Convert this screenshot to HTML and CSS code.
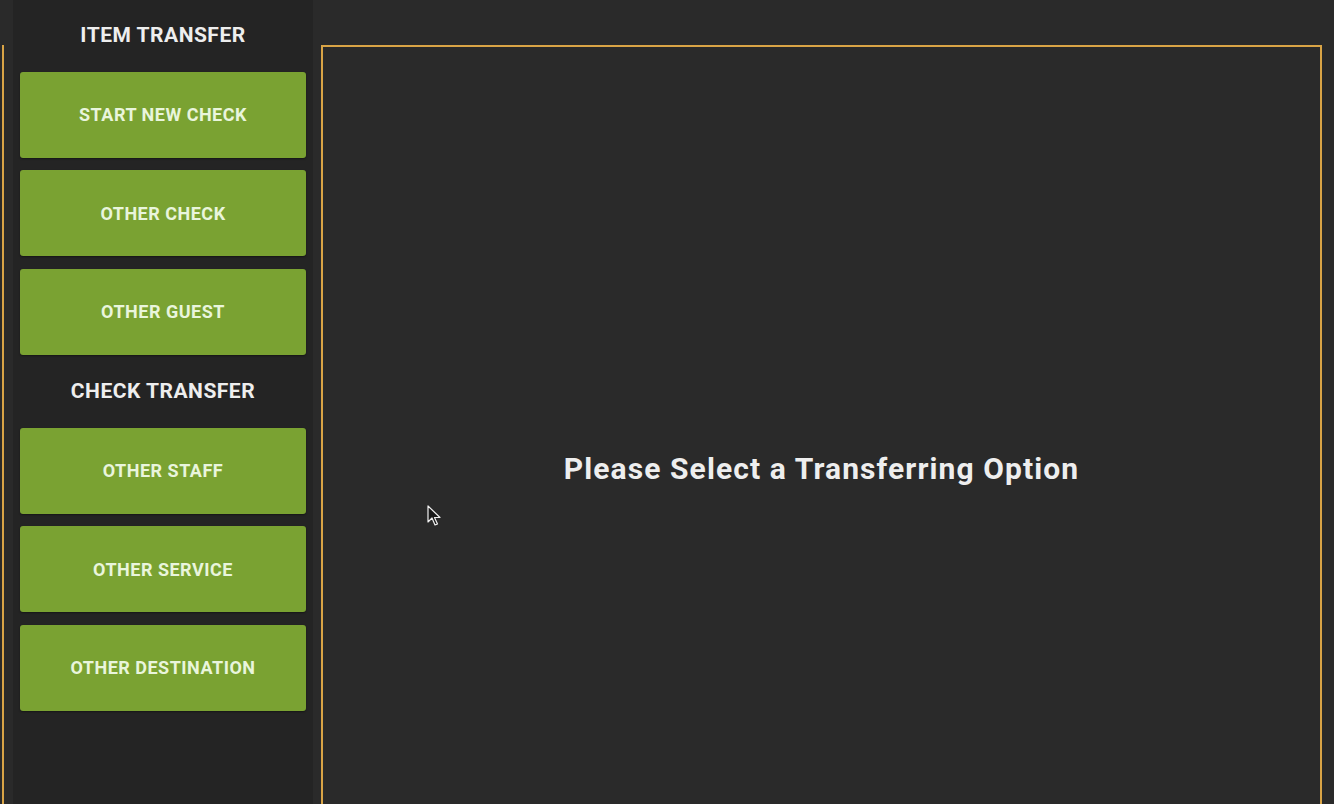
FILE: index.html
```html
<!DOCTYPE html>
<html>
<head>
<meta charset="utf-8">
<link rel="stylesheet" href="styles.css">
</head>
<body>
<div class="screen">
  <div class="prev-edge"></div>
  <aside class="sidebar">
    <h2 class="heading heading-first">ITEM TRANSFER</h2>
    <button class="btn">START NEW CHECK</button>
    <button class="btn">OTHER CHECK</button>
    <button class="btn">OTHER GUEST</button>
    <h2 class="heading">CHECK TRANSFER</h2>
    <button class="btn">OTHER STAFF</button>
    <button class="btn">OTHER SERVICE</button>
    <button class="btn">OTHER DESTINATION</button>
  </aside>
  <main class="panel">
    <p class="prompt">Please Select a Transferring Option</p>
  </main>
</div>
<svg class="cursor" width="14" height="22" viewBox="0 0 14 22">
  <path d="M1 1 L1 17 L5 13 L8 20 L10.5 19 L7.5 12.5 L13 12.5 Z" fill="#1a1a1a" stroke="#f0f0f0" stroke-width="1.2" stroke-linejoin="round"/>
</svg>
</body>
</html>
```
FILE: styles.css
```css
html, body {
  margin: 0;
  padding: 0;
  width: 1334px;
  height: 804px;
  overflow: hidden;
  background: #2a2a2a;
  font-family: Roboto, "Liberation Sans", sans-serif;
}
.screen {
  display: flex;
  align-items: flex-start;
  height: 804px;
  overflow: hidden;
}
.prev-edge {
  width: 2px;
  height: 759px;
  margin-top: 45px;
  border-right: 2px solid #d9a446;
  flex: none;
}
.sidebar {
  flex: none;
  width: 286px;
  margin-left: 9px;
  padding: 0 7px;
  height: 804px;
  background: #242424;
  display: flex;
  flex-direction: column;
  gap: 12.5px;
}
.heading {
  margin: 0;
  height: 48px;
  line-height: 48px;
  text-align: center;
  color: #eeeeee;
  font-size: 21px;
  letter-spacing: 0.5px;
  font-weight: 700;
}
.heading-first {
  margin-top: 11px;
}
.btn {
  height: 86px;
  border: none;
  border-radius: 3px;
  background: #7aa232;
  color: #e9f5dc;
  font-family: Roboto, "Liberation Sans", sans-serif;
  font-size: 18px;
  letter-spacing: 0.5px;
  font-weight: 700;
  box-shadow: 0 1px 2px rgba(0,0,0,0.4);
  padding: 0;
}
.panel {
  flex: none;
  margin-left: 8px;
  margin-top: 45px;
  width: 997px;
  height: 757px;
  border: 2px solid #d9a446;
  border-bottom: none;
  background: #2a2a2a;
  display: flex;
  justify-content: center;
}
.prompt {
  margin: 0;
  margin-top: 402px;
  height: 40px;
  line-height: 40px;
  color: #eeeeee;
  font-size: 30px;
  letter-spacing: 1.1px;
  font-weight: 700;
}
.cursor {
  position: absolute;
  left: 427px;
  top: 505px;
}
```
